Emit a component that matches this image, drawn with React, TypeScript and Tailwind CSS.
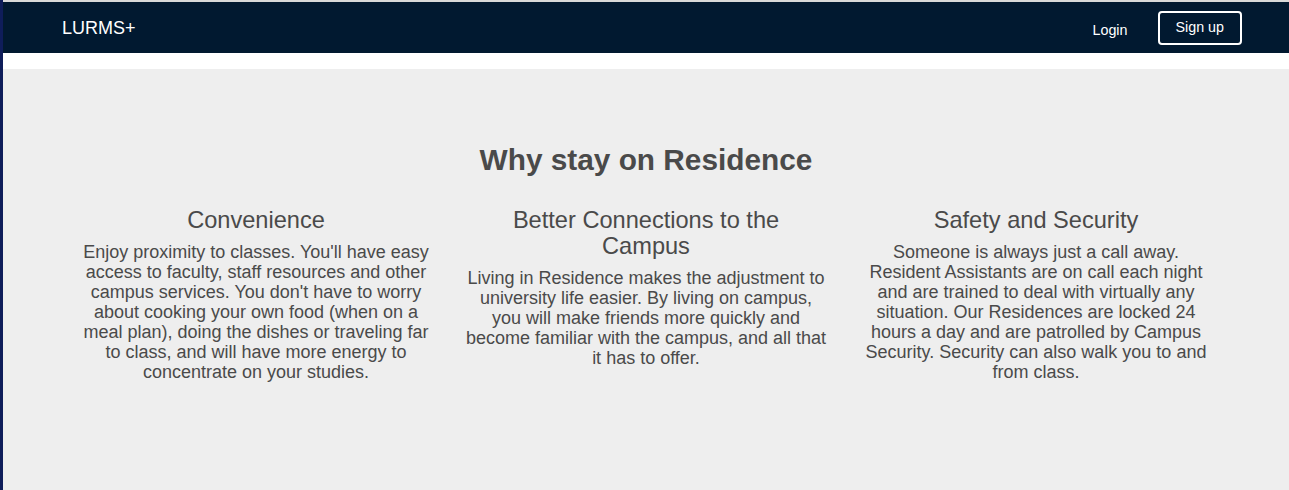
import React from 'react';

const features: { title: string; body: React.ReactNode }[] = [
  {
    title: 'Convenience',
    body: "Enjoy proximity to classes. You'll have easy access to faculty, staff resources and other campus services. You don't have to worry about cooking your own food (when on a meal plan), doing the dishes or traveling far to class, and will have more energy to concentrate on your studies.",
  },
  {
    title: 'Better Connections to the Campus',
    body: 'Living in Residence makes the adjustment to university life easier. By living on campus, you will make friends more quickly and become familiar with the campus, and all that it has to offer.',
  },
  {
    title: 'Safety and Security',
    body: (
      <>
        Someone is always just a call away.
        <br />
        Resident Assistants are on call each night and are trained to deal with virtually any situation. Our
        Residences are locked 24 hours a day and are patrolled by Campus Security. Security can also walk you to
        and from class.
      </>
    ),
  },
];

export default function App() {
  return (
    <div className="flex min-h-[490px] bg-white font-['Liberation_Sans',Arial,sans-serif]">
      <div className="w-[3px] shrink-0 bg-[#0f1d5a]" />
      <div className="flex min-w-0 flex-1 flex-col border-t-2 border-[#d9d9d9]">
        <nav className="flex h-[51px] items-center bg-[#011930] pl-[59px] pr-[47px] text-white">
          <span className="text-[18px] leading-none">LURMS+</span>
          <div className="ml-auto flex items-center">
            <a className="mt-[5px] text-[14.3px] leading-none">Login</a>
            <button
              type="button"
              className="ml-[30px] h-[34px] rounded-[4px] border-2 border-white px-[16px] text-[14.3px] leading-none text-white"
            >
              Sign up
            </button>
          </div>
        </nav>
        <div className="h-[16px] bg-white" />
        <section className="flex-1 bg-[#eeeeee] pt-[74px] pb-[40px] text-[#4a4a4a]">
          <h2 className="text-center text-[29.8px] font-bold leading-[33px]">Why stay on Residence</h2>
          <div className="mx-auto mt-[31px] grid w-[1170px] grid-cols-3">
            {features.map((f) => (
              <div key={f.title} className="px-[13px] text-center">
                <h3 className="mx-auto max-w-[300px] text-[23.6px] leading-[26px]">{f.title}</h3>
                <p className="mt-[9px] text-[18px] leading-[20px]">{f.body}</p>
              </div>
            ))}
          </div>
        </section>
      </div>
    </div>
  );
}
